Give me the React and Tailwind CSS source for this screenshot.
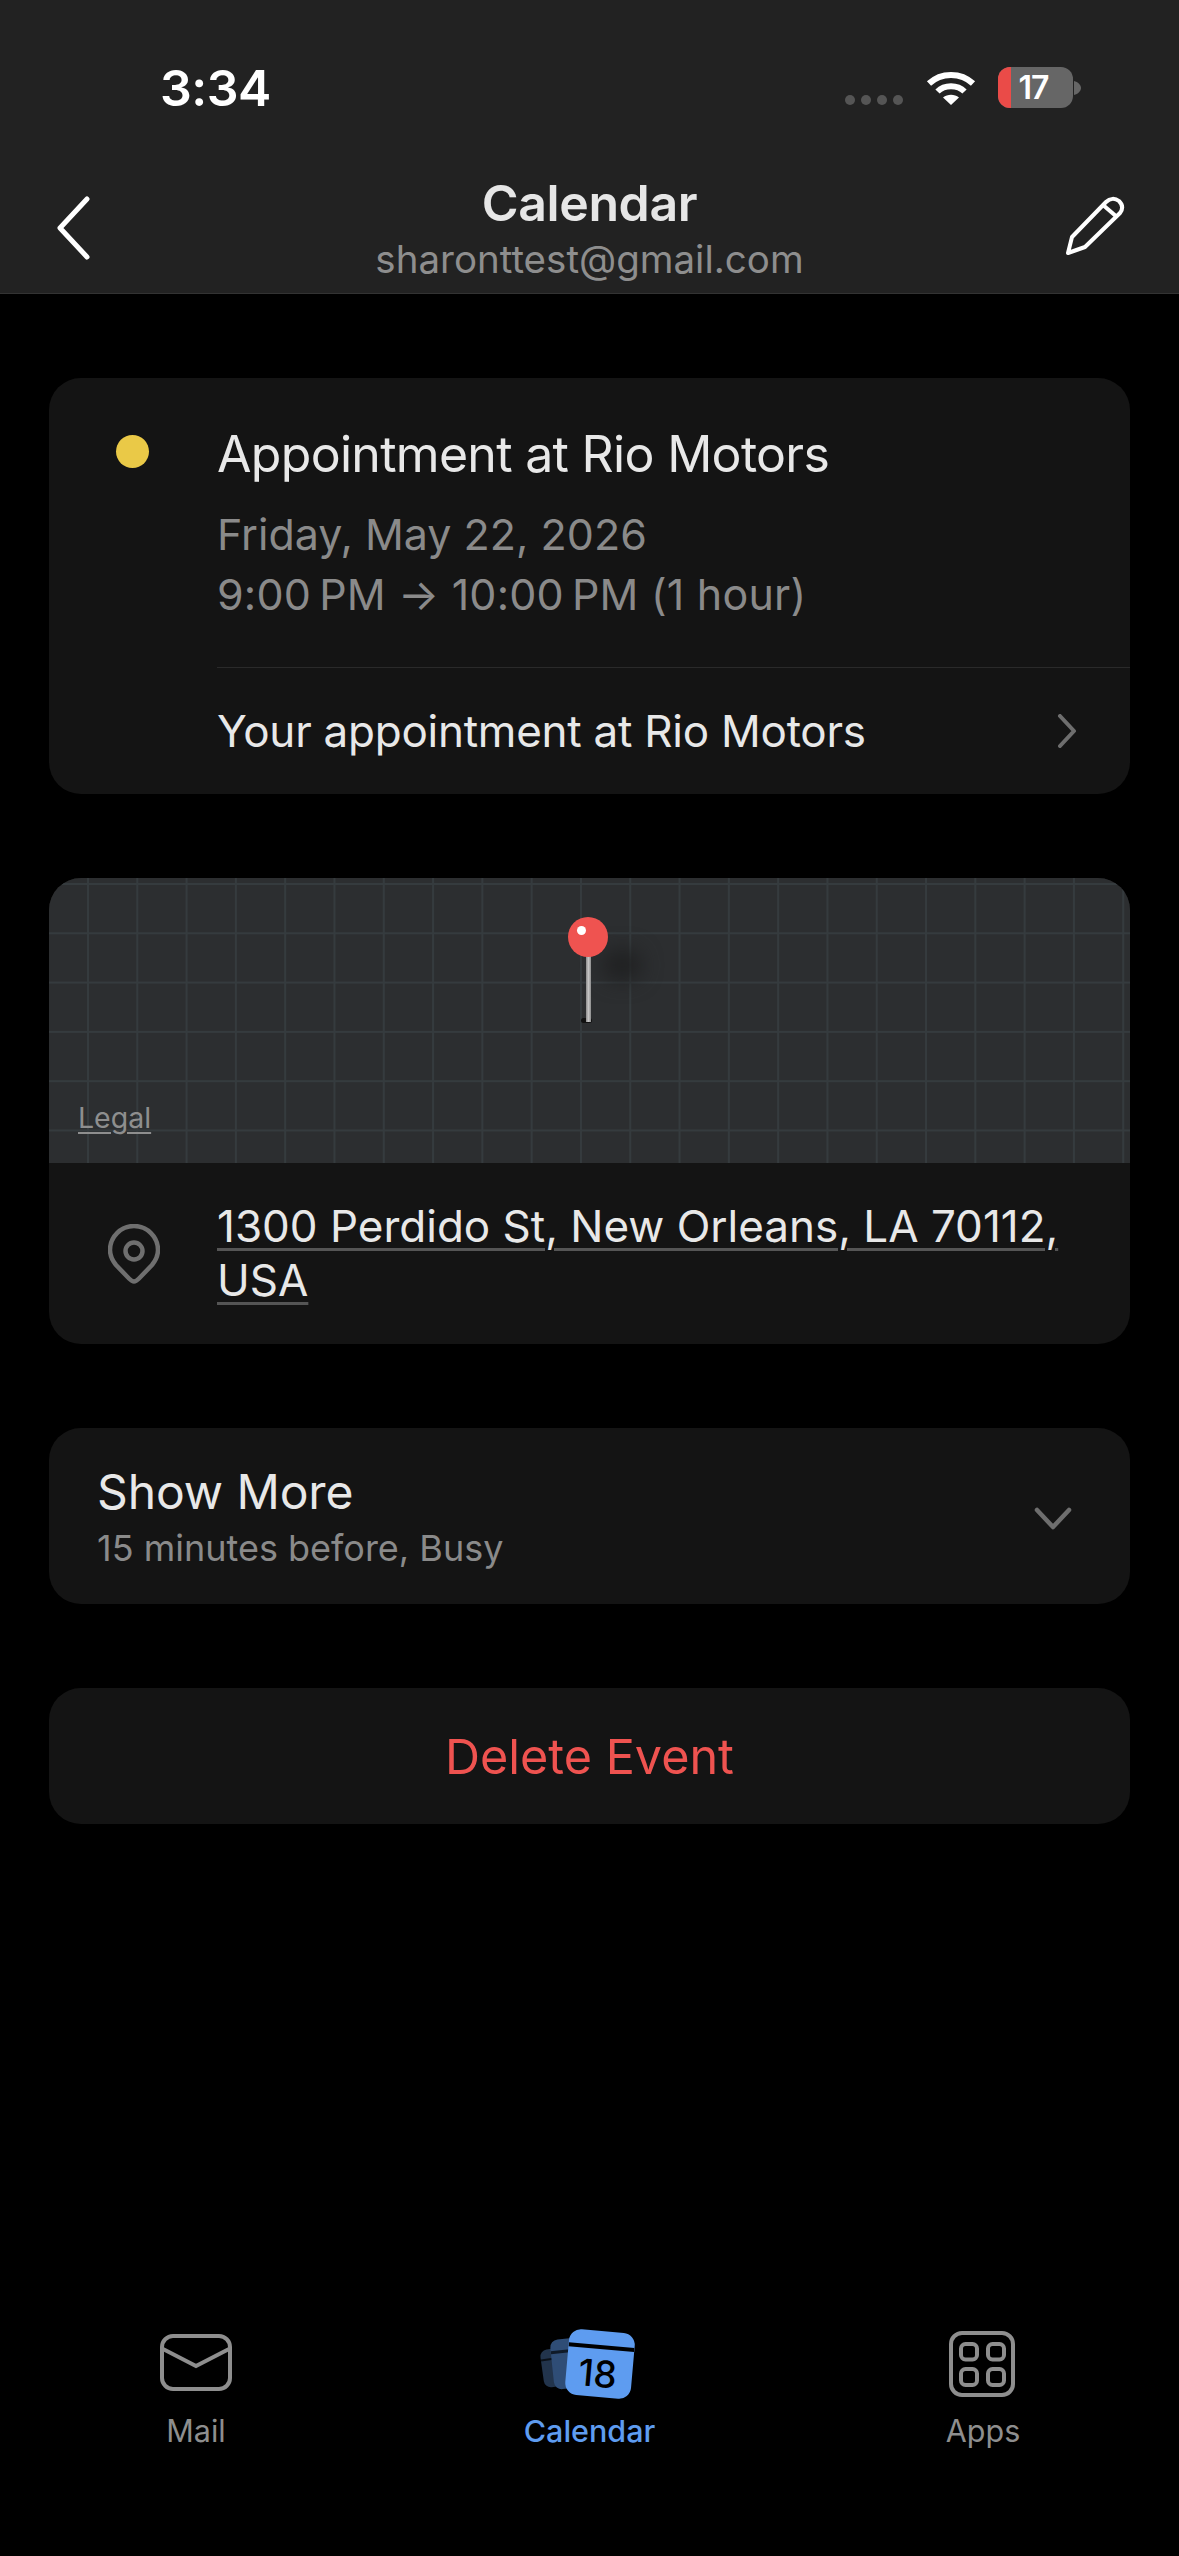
import React from "react";

const font = { fontFamily: "Inter, 'Noto Sans', sans-serif" };

function Wifi() {
  return (
    <svg width="50" height="36" viewBox="0 0 50 36" fill="none">
      <path d="M3 14.5C15 3 35 3 47 14.5" stroke="#fff" strokeWidth="6" />
      <path d="M11.5 22.5C18.5 15.5 31.5 15.5 38.5 22.5" stroke="#fff" strokeWidth="6" />
      <path d="M25 36L17 28.5C21.5 24.8 28.5 24.8 33 28.5Z" fill="#fff" />
    </svg>
  );
}

function Battery() {
  return (
    <div className="flex items-center">
      <div className="relative w-[75px] h-[41px] rounded-[12px] bg-[#666666] overflow-hidden flex items-center justify-center pr-[4px]">
        <div className="absolute left-0 top-0 bottom-0 w-[13px] bg-[#ea4b48]" />
        <span className="relative text-[32px] leading-none font-semibold text-white tracking-[-1px]">17</span>
      </div>
      <svg width="7" height="14" viewBox="0 0 7 14" className="ml-[1px]">
        <path d="M0 0C4 1 7 4 7 7C7 10 4 13 0 14Z" fill="#666666" />
      </svg>
    </div>
  );
}

function MapPin() {
  return (
    <div className="absolute left-[519px] top-[39px] w-[40px] h-[106px]">
      <div className="absolute left-[34px] top-[32px] w-[40px] h-[32px] rounded-full bg-[#202122] blur-[10px]" />
      <div className="absolute left-[13px] bottom-0 w-[11px] h-[5px] rounded-full bg-[#111111]" />
      <div className="absolute left-[18px] top-[38px] bottom-[1px] w-[5px] bg-gradient-to-r from-[#8d8d8d] via-[#c4c4c4] to-[#8d8d8d]" />
      <div className="absolute left-0 top-0 w-[40px] h-[40px] rounded-full bg-[#ef5350]" />
      <div className="absolute left-[9px] top-[9px] w-[9px] h-[9px] rounded-full bg-white" />
    </div>
  );
}

function CalendarIcon() {
  return (
    <div className="relative w-[72px] h-[72px]">
      <div className="absolute left-[-12px] top-[20px] w-[34px] h-[38px] rounded-[7px] bg-[#22344c] rotate-[-8deg] overflow-hidden">
        <div className="mt-[9px] h-[2px] bg-[#0b1119]" />
      </div>
      <div className="absolute left-[-2px] top-[10px] w-[40px] h-[50px] rounded-[8px] bg-[#2f4d76] rotate-[-6deg] overflow-hidden">
        <div className="mt-[11px] h-[3px] bg-[#0f1a28]" />
      </div>
      <div className="absolute left-[13px] top-[3px] w-[66px] h-[66px] rounded-[12px] bg-[#5e9cf0] rotate-[5deg] overflow-hidden flex flex-col">
        <div className="mt-[14px] h-[4px] bg-black shrink-0" />
        <div className="flex-1 flex items-center justify-center pr-[3px] text-[37px] leading-none font-medium text-black">18</div>
      </div>
    </div>
  );
}

function Tab({ icon, label, active, w }) {
  return (
    <div className={"flex flex-col items-center " + w}>
      <div className="h-[72px] flex items-center justify-center">{icon}</div>
      <span className={"mt-[13px] text-[30.5px] leading-[36px] " + (active ? "text-[#5e9cf0] font-medium" : "text-[#8e8e8e]")}>{label}</span>
    </div>
  );
}

export default function App() {
  return (
    <div style={font} className="w-[1179px] h-[2556px] bg-black flex flex-col overflow-hidden antialiased">
      <header className="h-[294px] shrink-0 bg-[#222222] border-b border-[#333333] flex flex-col">
        <div className="h-[170px] flex items-start justify-between pl-[160px] pr-[98px] pt-[60px]">
          <span className="text-[50px] leading-[56px] font-semibold text-white tracking-[-0.5px]">3:34</span>
          <div className="flex items-center pt-[7px]">
            <div className="flex gap-[6px] mt-[24px]">
              <span className="w-[10px] h-[10px] rounded-full bg-[#555555]" />
              <span className="w-[10px] h-[10px] rounded-full bg-[#555555]" />
              <span className="w-[10px] h-[10px] rounded-full bg-[#555555]" />
              <span className="w-[10px] h-[10px] rounded-full bg-[#555555]" />
            </div>
            <div className="ml-[23px] mr-[22px] mb-[2px]"><Wifi /></div>
            <Battery />
          </div>
        </div>
        <div className="relative flex-1 flex items-start justify-between pl-[55px] pr-[52px] pt-[26px]">
          <svg width="36" height="64" viewBox="0 0 36 64" fill="none">
            <path d="M32 3L5 32L32 61" stroke="#fff" strokeWidth="5" strokeLinecap="round" strokeLinejoin="round" />
          </svg>
          <svg width="64" height="64" viewBox="0 0 64 64" fill="none" className="mt-[-1px]">
            <path d="M5 58L9 42L43 7C47 3 52 3 56 6C60 10 60 14 57 18L22 52Z" stroke="#fff" strokeWidth="4" strokeLinejoin="round" />
            <path d="M40 10L54 22" stroke="#fff" strokeWidth="4" />
          </svg>
          <div className="absolute inset-x-0 top-0 flex flex-col items-center pt-[3px]">
            <span className="text-[50px] leading-[60px] font-semibold text-[#e6e6e6] tracking-[-0.4px]">Calendar</span>
            <span className="mt-[3px] text-[38.5px] leading-[46px] text-[#8e8e8e]">sharonttest@gmail.com</span>
          </div>
        </div>
      </header>

      <main className="flex-1 px-[49px] pt-[84px] flex flex-col gap-[84px]">
        <section className="h-[416px] rounded-[32px] bg-[#141414] flex flex-col">
          <div className="flex-1 flex">
            <div className="w-[168px] pl-[67px] pt-[57px]">
              <div className="w-[33px] h-[33px] rounded-full bg-[#eac947]" />
            </div>
            <div className="flex-1 pt-[46px]">
              <div className="text-[50px] leading-[60px] text-[#e8e8e8] tracking-[-0.7px]">Appointment at Rio Motors</div>
              <div className="mt-[20px] text-[43px] leading-[60px] text-[#8a8a8a]">
                <div>Friday, May 22, 2026</div>
                <div className="tracking-[0.2px]">9:00{"\u202f"}PM → 10:00{"\u202f"}PM (1 hour)</div>
              </div>
            </div>
          </div>
          <div className="ml-[168px] h-[127px] border-t border-[#2a2a2a] flex items-center justify-between pr-[52px]">
            <span className="text-[44px] leading-[60px] text-[#e8e8e8] tracking-[-0.25px]">Your appointment at Rio Motors</span>
            <svg width="22" height="34" viewBox="0 0 22 34" fill="none">
              <path d="M4 2L18 17L4 32" stroke="#6e6e6e" strokeWidth="4" strokeLinecap="round" strokeLinejoin="round" />
            </svg>
          </div>
        </section>

        <section className="h-[466px] rounded-[32px] bg-[#141414] overflow-hidden flex flex-col">
          <div className="relative h-[285px] shrink-0 bg-[#2c2e30] bg-[linear-gradient(to_right,#353b3e_2px,transparent_2px),linear-gradient(to_bottom,#353b3e_2px,transparent_2px)] bg-[size:49.3px_49.3px] bg-[position:38px_5px]">
            <MapPin />
            <span className="absolute left-[29px] top-[223px] text-[28.5px] leading-[34px] text-[#8e8e8e] underline underline-offset-[4px]">Legal</span>
          </div>
          <div className="flex-1 flex items-center">
            <div className="w-[168px] pl-[59px]">
              <svg width="52" height="60" viewBox="0 0 52 60" fill="none">
                <path d="M26 57.5C24 57.5 23 56.5 21 54.5L8 41C4 36 2 32 2 26C2 12.8 12.8 2 26 2C39.2 2 50 12.8 50 26C50 32 48 36 44 41L31 54.5C29 56.5 28 57.5 26 57.5Z" stroke="#6f6f6f" strokeWidth="4.5" strokeLinejoin="round" />
                <circle cx="26" cy="27" r="8.5" stroke="#6f6f6f" strokeWidth="4.5" />
              </svg>
            </div>
            <div className="w-[860px] mt-[-2px] text-[44px] leading-[54px] text-[#e8e8e8] underline decoration-[#555555] decoration-[3px] underline-offset-[6px]">
              1300 Perdido St, New Orleans, LA 70112, USA
            </div>
          </div>
        </section>

        <section className="h-[176px] rounded-[32px] bg-[#141414] flex items-center justify-between pl-[48px] pr-[58px]">
          <div className="flex flex-col pt-[1px]">
            <span className="text-[48px] leading-[60px] text-[#e8e8e8] tracking-[-0.1px]">Show More</span>
            <span className="mt-[3px] text-[36px] leading-[46px] text-[#8a8a8a]">15 minutes before, Busy</span>
          </div>
          <svg width="38" height="24" viewBox="0 0 38 24" fill="none" className="mt-[5px]">
            <path d="M3 3L19 20L35 3" stroke="#6e6e6e" strokeWidth="4.5" strokeLinecap="round" strokeLinejoin="round" />
          </svg>
        </section>

        <section className="h-[136px] rounded-[32px] bg-[#141414] flex items-center justify-center pt-[2px]">
          <span className="text-[48.5px] leading-[60px] text-[#ef5350]">Delete Event</span>
        </section>
      </main>

      <nav className="shrink-0 h-[228px] flex items-start justify-between px-[96px]">
        <Tab
          w="w-[200px]"
          label="Mail"
          icon={
            <svg width="72" height="57" viewBox="0 0 72 57" fill="none" className="mt-[-3px]">
              <rect x="2" y="2" width="68" height="53" rx="11" stroke="#8e8e8e" strokeWidth="4" />
              <path d="M3 15L36 32L69 15" stroke="#8e8e8e" strokeWidth="4" />
            </svg>
          }
        />
        <Tab w="w-[200px]" label="Calendar" active icon={<CalendarIcon />} />
        <Tab
          w="w-[200px]"
          label="Apps"
          icon={
            <svg width="66" height="66" viewBox="0 0 66 66" fill="none" className="mr-[2px]">
              <rect x="2" y="2" width="62" height="62" rx="11" stroke="#8e8e8e" strokeWidth="4" />
              <rect x="12" y="13" width="16" height="15.5" rx="4.5" stroke="#8e8e8e" strokeWidth="4" />
              <rect x="39" y="13" width="16" height="15.5" rx="4.5" stroke="#8e8e8e" strokeWidth="4" />
              <rect x="12" y="38" width="16" height="16" rx="4.5" stroke="#8e8e8e" strokeWidth="4" />
              <rect x="39" y="38" width="16" height="16" rx="4.5" stroke="#8e8e8e" strokeWidth="4" />
            </svg>
          }
        />
      </nav>
    </div>
  );
}
